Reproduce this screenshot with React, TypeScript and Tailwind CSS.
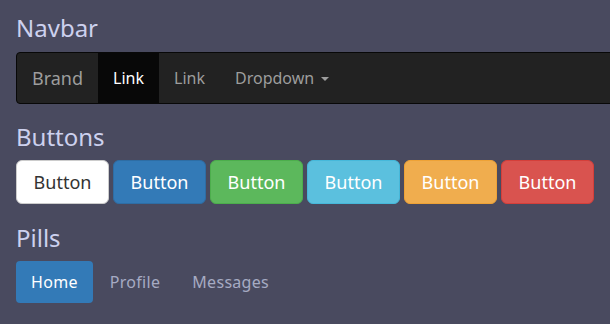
import React from "react";

export default function App() {
  const font = { fontFamily: '"Noto Sans", "Liberation Sans", sans-serif' };
  const btns = [
    "bg-white border-[#ccc] text-[#333]",
    "bg-[#337ab7] border-[#2e6da4] text-white",
    "bg-[#5cb85c] border-[#4cae4c] text-white",
    "bg-[#5bc0de] border-[#46b8da] text-white",
    "bg-[#f0ad4e] border-[#eea236] text-white",
    "bg-[#d9534f] border-[#d43f3a] text-white",
  ];
  return (
    <div
      className="w-[610px] h-[324px] overflow-hidden bg-[#494a5f] pl-4 pt-[14px]"
      style={font}
    >
      <h3 className="text-[24px] leading-[28px] text-[#cdd1ee] m-0">Navbar</h3>
      <div className="mt-[10px] w-[640px] h-[52px] rounded-[4px] border border-[#080808] bg-[#222222] flex">
        <div className="px-[15px] h-[50px] flex items-center text-[18px] leading-[20px] text-[#9d9d9d]">
          Brand
        </div>
        <div className="px-[15px] h-[50px] flex items-center text-[16px] leading-[20px] text-white bg-[#080808]">
          Link
        </div>
        <div className="px-[15px] h-[50px] flex items-center text-[16px] leading-[20px] text-[#9d9d9d]">
          Link
        </div>
        <div className="px-[15px] h-[50px] flex items-center text-[16px] leading-[20px] text-[#9d9d9d]">
          Dropdown
          <span className="ml-[7px] mt-[2px] w-0 h-0 border-x-[4px] border-x-transparent border-t-[4px] border-t-[#9d9d9d]" />
        </div>
      </div>

      <h3 className="mt-[19px] text-[24px] leading-[28px] text-[#cdd1ee]">Buttons</h3>
      <div className="mt-[9px] flex gap-[4px]">
        {btns.map((c, i) => (
          <div
            key={i}
            className={`w-[93px] h-[44px] rounded-[6px] border flex items-center justify-center text-[18px] ${c}`}
          >
            Button
          </div>
        ))}
      </div>

      <h3 className="mt-[20px] text-[24px] leading-[28px] text-[#cdd1ee]">Pills</h3>
      <div className="mt-[9px] flex gap-[2px]">
        <div className="h-[42px] px-[15px] rounded-[4px] bg-[#337ab7] text-white flex items-center text-[16px] tracking-[0.3px]">
          Home
        </div>
        <div className="h-[42px] px-[15px] rounded-[4px] text-[#a6abc3] flex items-center text-[16px] tracking-[0.3px]">
          Profile
        </div>
        <div className="h-[42px] px-[15px] rounded-[4px] text-[#a6abc3] flex items-center text-[16px] tracking-[0.3px]">
          Messages
        </div>
      </div>
    </div>
  );
}
